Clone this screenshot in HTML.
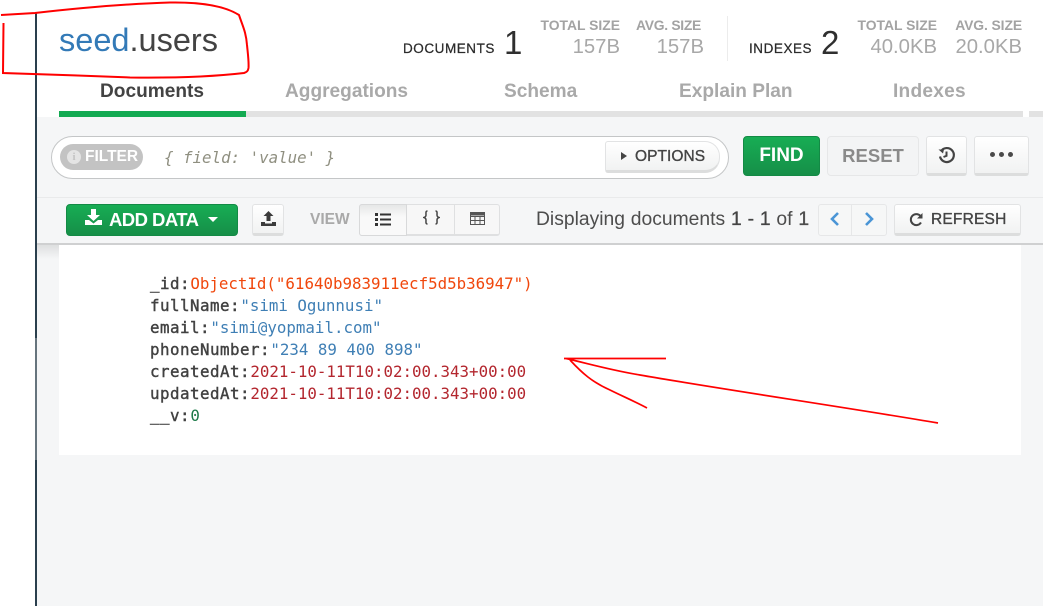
<!DOCTYPE html>
<html><head><meta charset="utf-8"><style>
html,body{margin:0;padding:0;background:#fff}
#p{position:relative;width:1043px;height:606px;overflow:hidden;background:#fff;font-family:"Liberation Sans",sans-serif}
#p div{position:absolute;white-space:nowrap;box-sizing:border-box}
.n{color:#a8a8a8;font-size:20.3px;text-align:right;line-height:20px}
.l{color:#a3a3a3;font-size:13.9px;font-weight:bold;line-height:14px;text-align:right}
.t{font-size:19.1px;font-weight:bold;color:#a9a9a9;line-height:22px;top:81px}
.b{background:linear-gradient(#fff,#f1f2f2);border:1px solid #e2e3e4;border-bottom:3px solid #dcdddd;border-radius:3px}
.m{font-family:"DejaVu Sans Mono",monospace;font-size:15.8px;line-height:22px;left:150px}
.m b{color:#414141;font-weight:normal;-webkit-text-stroke:.4px #414141;letter-spacing:.49px;margin-right:.3px}
.s{font-size:13.5px;line-height:14px;color:#2b2b2b;letter-spacing:.55px;-webkit-text-stroke:.25px #2b2b2b}
.w{font-size:15.5px;color:#444;line-height:18px;-webkit-text-stroke:.35px #444}
</style></head><body><div id="p">
<div style="left:36px;top:117px;width:1007px;height:489px;background:#f5f6f7"></div>
<div style="left:35px;top:12px;width:2px;height:594px;background:#2a3f4d"></div>
<div style="left:35px;top:338px;width:2px;height:122px;background:#66747d"></div>

<div style="left:59px;top:20px;font-size:32.5px;line-height:40px;color:#434343"><span style="color:#337ab7">seed</span>.users</div>

<div class="s" style="left:403px;top:42px">DOCUMENTS</div>
<div style="left:504px;top:25px;font-size:33px;line-height:36px;color:#2f2f2f">1</div>
<div class="l" style="left:520px;width:100px;top:18px">TOTAL SIZE</div>
<div class="l" style="left:600px;width:101px;top:18px;letter-spacing:-.3px">AVG. SIZE</div>
<div class="n" style="left:520px;width:100px;top:37px">157B</div>
<div class="n" style="left:600px;width:104px;top:37px">157B</div>
<div style="left:727px;top:16px;width:1px;height:45px;background:#ececec"></div>
<div class="s" style="left:749px;top:42px">INDEXES</div>
<div style="left:821px;top:25px;font-size:33px;line-height:36px;color:#2f2f2f">2</div>
<div class="l" style="left:837px;width:100px;top:18px">TOTAL SIZE</div>
<div class="l" style="left:922px;width:100px;top:18px;letter-spacing:-.1px">AVG. SIZE</div>
<div class="n" style="left:837px;width:100px;top:37px">40.0KB</div>
<div class="n" style="left:922px;width:100px;top:37px">20.0KB</div>

<div class="t" style="left:100px;color:#434343">Documents</div>
<div class="t" style="left:285px">Aggregations</div>
<div class="t" style="left:504px">Schema</div>
<div class="t" style="left:679px">Explain Plan</div>
<div class="t" style="left:893px;letter-spacing:.25px">Indexes</div>
<div style="left:59px;top:111px;width:964px;height:6px;background:#e2e2e2"></div>
<div style="left:1029px;top:111px;width:14px;height:6px;background:#e2e2e2"></div>
<div style="left:59px;top:111px;width:187px;height:6px;background:#13aa52"></div>

<div style="left:51px;top:136px;width:678px;height:43px;background:#fff;border:1px solid #c4c6c7;border-radius:22px"></div>
<div style="left:60px;top:144px;width:83px;height:26px;background:#c3c3c3;border-radius:13px"></div>
<div style="left:67px;top:150px;width:14px;height:14px;background:#e4e4e4;border-radius:50%;color:#c3c3c3;font:bold 11px/14px 'Liberation Serif',serif;text-align:center">i</div>
<div style="left:85px;top:147px;font-size:15.5px;font-weight:bold;color:#fff;line-height:20px">FILTER</div>
<div style="left:164px;top:148px;font:italic 15.8px/20px 'DejaVu Sans Mono',monospace;color:#8f8f80">{ field: 'value' }</div>
<div class="b" style="left:605px;top:141px;width:115px;height:32px;border-radius:3px 15px 15px 3px"></div>
<div style="left:621px;top:152px;width:0;height:0;border-left:6px solid #444;border-top:4.5px solid transparent;border-bottom:4.5px solid transparent"></div>
<div class="w" style="left:635px;top:148px;letter-spacing:.05px">OPTIONS</div>

<div style="left:743px;top:136px;width:77px;height:40px;background:linear-gradient(#17ad54,#168f48);border:1px solid #138a45;border-radius:4px;color:#fff;font-size:19px;font-weight:bold;line-height:38px;text-align:center">FIND</div>
<div style="left:827px;top:136px;width:92px;height:40px;background:#f3f4f5;border:1px solid #e6e7e8;border-radius:4px;color:#8a8a8a;font-size:18.5px;font-weight:bold;line-height:38px;text-align:center">RESET</div>
<div class="b" style="left:926px;top:136px;width:41px;height:40px"></div>
<svg style="position:absolute;left:937px;top:146px" width="19" height="19" viewBox="0 0 19 19" fill="none" stroke="#444" stroke-width="2.2"><path d="M4 5.2A7 7 0 1 1 3 10.5"/><path d="M1.5 3.5h5.500l-1 4z" fill="#444" stroke="none"/><path d="M9.500 5.500v4.300l-3 1.200" stroke-width="2"/></svg>
<div class="b" style="left:974px;top:136px;width:55px;height:40px"></div>
<div style="left:990px;top:152px;width:5px;height:5px;border-radius:50%;background:#4a4a4a"></div>
<div style="left:999px;top:152px;width:5px;height:5px;border-radius:50%;background:#4a4a4a"></div>
<div style="left:1008px;top:152px;width:5px;height:5px;border-radius:50%;background:#4a4a4a"></div>

<div style="left:37px;top:197px;width:1006px;height:1px;background:#e9eaeb"></div>
<div style="left:37px;top:243px;width:1006px;height:2px;background:#cfd0d1"></div>
<div style="left:37px;top:245px;width:22px;height:14px;background:linear-gradient(#dedfe0,#f5f6f7)"></div>

<div style="left:66px;top:204px;width:172px;height:32px;background:linear-gradient(#17ad54,#168f48);border:1px solid #138a45;border-radius:4px"></div>
<svg style="position:absolute;left:84px;top:208px" width="20" height="19" viewBox="0 0 20 19"><path d="M7 1h5v6h4l-6.500 6L3 7h4zM1 12h4l4.500 3.500L14 12h4v5H1z" fill="#fff"/></svg>
<div style="left:109px;top:208px;font-size:18.5px;font-weight:bold;color:#fff;line-height:24px;letter-spacing:-.55px">ADD DATA</div>
<div style="left:208px;top:217px;width:0;height:0;border-top:5.500px solid #fff;border-left:5.500px solid transparent;border-right:5.500px solid transparent"></div>
<div class="b" style="left:252px;top:204px;width:32px;height:32px"></div>
<svg style="position:absolute;left:260px;top:210px" width="17" height="18" viewBox="0 0 17 18"><path d="M8.500 1l5 5h-3v5h-4V6h-3zM1 12h4v1.500h7V12h4v4H1z" fill="#3b3b3b"/></svg>
<div style="left:310px;top:211px;font-size:15.500px;font-weight:bold;color:#a9a9a9;line-height:18px">VIEW</div>
<div style="left:359px;top:204px;width:141px;height:32px;background:#f7f7f7;border:1px solid #dfe0e1;border-bottom-width:2px;border-radius:3px"></div>
<div style="left:359px;top:204px;width:48px;height:32px;background:linear-gradient(#e6e7e7,#f9f9f9 40%);border:1px solid #d8d9da;border-radius:3px 0 0 3px"></div>
<div style="left:454px;top:205px;width:1px;height:30px;background:#dfe0e1"></div>
<svg style="position:absolute;left:375px;top:213px" width="16" height="13" viewBox="0 0 16 13" fill="#333"><rect x="0" y="0" width="3" height="3"/><rect x="0" y="5" width="3" height="3"/><rect x="0" y="10" width="3" height="3"/><rect x="5" y="0.500" width="11" height="2"/><rect x="5" y="5.500" width="11" height="2"/><rect x="5" y="10.500" width="11" height="2"/></svg>
<svg style="position:absolute;left:423px;top:210px" width="17" height="15" viewBox="0 0 17 15" fill="none" stroke="#444" stroke-width="1.500"><path d="M4.500 1C2.500 1 3 3 3 5C3 6.500 2.500 7 1 7.500C2.500 8 3 8.500 3 10C3 12 2.500 14 4.500 14M12.500 1C14.500 1 14 3 14 5C14 6.500 14.500 7 16 7.500C14.500 8 14 8.500 14 10C14 12 14.500 14 12.500 14"/></svg>
<svg style="position:absolute;left:470px;top:212px" width="15" height="13" viewBox="0 0 15 13" fill="none" stroke="#555" stroke-width="1"><rect x=".5" y=".5" width="14" height="12"/><path d="M.5 4.500h14M.5 8.500h14M5 4v9M10 4v9"/><rect x=".5" y=".5" width="14" height="2.500" fill="#555"/></svg>

<div style="left:536px;top:209px;font-size:19.3px;color:#4d4d4d;line-height:22px;word-spacing:.5px">Displaying documents <span style="color:#444;-webkit-text-stroke:.3px #444">1 - 1</span> of <span style="-webkit-text-stroke:.3px #444">1</span></div>
<div style="left:818px;top:204px;width:69px;height:32px;background:#f6f7f7;border:1px solid #e6e7e8;border-radius:3px"></div>
<div style="left:851px;top:205px;width:1px;height:30px;background:#e6e7e8"></div>
<svg style="position:absolute;left:828px;top:210px" width="50" height="18" viewBox="0 0 50 18" fill="none" stroke="#4a95d6" stroke-width="2.600"><path d="M10 3L4 9l6 6M38 3l6 6-6 6"/></svg>
<div class="b" style="left:894px;top:204px;width:127px;height:32px"></div>
<svg style="position:absolute;left:909px;top:212px" width="15" height="15" viewBox="0 0 15 15" fill="none" stroke="#444" stroke-width="2"><path d="M12 10.500A5.500 5.500 0 1 1 11.500 4"/><path d="M13.500 1v5.500H8z" fill="#444" stroke="none"/></svg>
<div class="w" style="left:931px;top:211px;letter-spacing:.2px">REFRESH</div>

<div style="left:59px;top:245px;width:962px;height:210px;background:#fff"></div>
<div class="m" style="top:273px"><b>_id:</b><span style="color:#f0470c">ObjectId("61640b983911ecf5d5b36947")</span></div>
<div class="m" style="top:295px"><b>fullName:</b><span style="color:#3f7fb5">"simi Ogunnusi"</span></div>
<div class="m" style="top:317px"><b>email:</b><span style="color:#3f7fb5">"simi@yopmail.com"</span></div>
<div class="m" style="top:339px"><b>phoneNumber:</b><span style="color:#3f7fb5">"234 89 400 898"</span></div>
<div class="m" style="top:361px"><b>createdAt:</b><span style="color:#b3262e">2021-10-11T10:02:00.343+00:00</span></div>
<div class="m" style="top:383px"><b>updatedAt:</b><span style="color:#b3262e">2021-10-11T10:02:00.343+00:00</span></div>
<div class="m" style="top:405px"><b>__v:</b><span style="color:#1c7a48">0</span></div>

<svg style="position:absolute;left:0;top:0" width="1043" height="606" viewBox="0 0 1043 606" fill="none" stroke="#f00">
<path stroke-width="2" d="M1 15L35 13C70 9 120 4 170 2.500C200 2 225 6 239 15C243 27 246 32 247 45C248 55 249 62 248.500 68C248 71 247 72 244 73C210 77 170 78 130 77.500C90 76 40 74 3 73L3.500 23"/>
<path stroke-width="1.700" d="M564 358.500H666M566 358.500C590 364 610 370 640 375C720 389 850 408 938 423M570 360C582 373 592 382 610 390C622 396 636 402 647 408"/>
</svg>
</div></body></html>
